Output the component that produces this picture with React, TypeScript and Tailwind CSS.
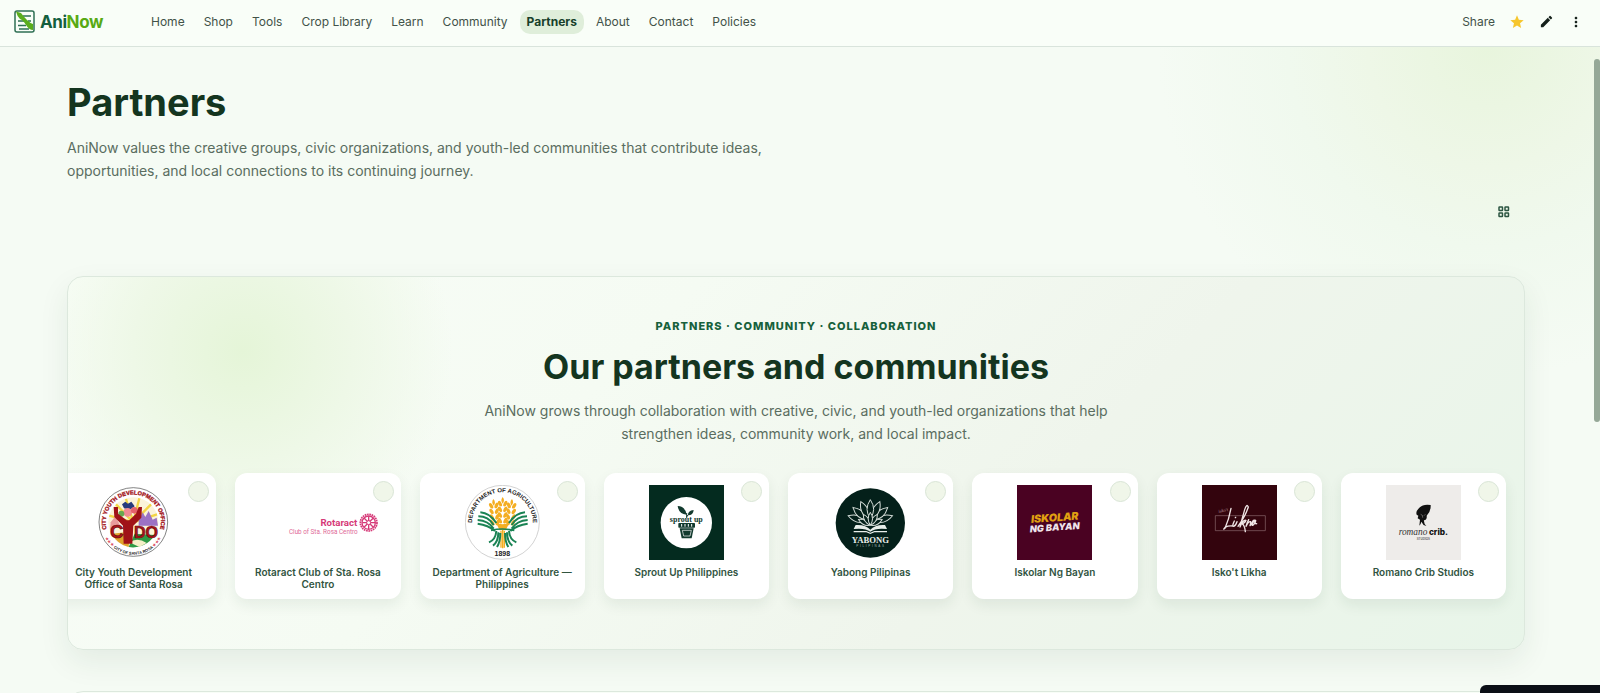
import type { ReactNode } from 'react'
import { MdEdit, MdMoreVert, MdStar } from 'react-icons/md'

const navItems = ['Home', 'Shop', 'Tools', 'Crop Library', 'Learn', 'Community', 'Partners', 'About', 'Contact', 'Policies']

const CydoLogo = () => (
  <svg viewBox="0 0 225 225" className="size-full overflow-visible" aria-hidden="true">
    <circle cx="112" cy="111" r="103" fill="#fff" stroke="#444" strokeWidth="2" />
    <circle cx="112" cy="112" r="75" fill="#fbf3da" />
    <path d="M112 112 60 58M112 112 90 42M112 112 130 40M112 112 165 58M112 112 183 88M112 112 40 92" stroke="#f3d545" strokeWidth="7" />
    <path d="M48 146a75 75 0 0 0 50 40l4-46z" fill="#e0a32c" />
    <path d="M98 186a76 76 0 0 0 78-36l-60-4z" fill="#2f9a45" />
    <path d="M100 172q24-16 52 2l-22 12z" fill="#f5f0c8" />
    <path d="m128 106 12-24 8 14 10-18 12 26 12-6 4 24h-58z" fill="#9b72c4" />
    <path d="m44 112 14-18 14 26-14 10-16 4z" fill="#e99c9c" />
    <path d="m78 58 10-8 8 6 10-6 10 14-14 10-18-4z" fill="#273a7c" />
    <circle cx="95" cy="82" r="13" fill="#f08a93" />
    <circle cx="115" cy="76" r="10" fill="#e5616c" />
    <circle cx="76" cy="86" r="9" fill="#68a84f" />
    <path d="M53 66h13v20l26 20h8l20-20 8-20h10l-2 32-24 24-3 54H83l-2-54-26-26z" fill="#a01218" />
    <text x="42" y="160" fontSize="56" fontWeight="900" fill="#b01319" stroke="#5d0b0e" strokeWidth="2" className="font-['Liberation_Sans']">C</text>
    <text x="114" y="160" fontSize="48" fontWeight="900" fill="#b01319" stroke="#5d0b0e" strokeWidth="2" className="font-['Liberation_Sans']">DO</text>
    <path id="cydo-top" d="M37 147A83 83 0 1 1 187 147" fill="none" />
    <text fontSize="17" fontWeight="800" fill="#a3161b" stroke="#a3161b" strokeWidth="1" textAnchor="middle" className="font-['Liberation_Sans']">
      <textPath href="#cydo-top" startOffset="50%">CITY YOUTH DEVELOPMENT OFFICE</textPath>
    </text>
    <path id="cydo-bottom" d="M24 150A95 95 0 0 0 200 150" fill="none" />
    <text fontSize="12" fontWeight="700" fill="#222" textAnchor="middle" className="font-['Liberation_Sans']">
      <textPath href="#cydo-bottom" startOffset="50%"><tspan fill="#d9475c">★★★</tspan> CITY OF SANTA ROSA <tspan fill="#d9475c">★★★</tspan></textPath>
    </text>
  </svg>
)

const RotaractLogo = () => (
  <svg viewBox="0 0 225 225" className="size-full overflow-visible" aria-hidden="true">
    <text x="232" y="122" fontSize="29" fontWeight="700" fill="#d63a78" textAnchor="end" className="font-['Roboto']">Rotaract</text>
    <text x="233" y="146" fontSize="19" fill="#e06a98" textAnchor="end" className="font-['Roboto']">Club of Sta. Rosa Centro</text>
    <g fill="none" stroke="#d63a78">
      <circle cx="266" cy="113" r="25" strokeWidth="5" strokeDasharray="5 2" />
      <circle cx="266" cy="113" r="20" strokeWidth="4" />
      <path d="M266 94v38M247 113h38M252 99l28 28M280 99l-28 28" strokeWidth="4" />
      <circle cx="266" cy="113" r="6" fill="#fff" strokeWidth="3" />
    </g>
  </svg>
)

const grains = [0, 1, 2, 3]

const AgricultureLogo = () => (
  <svg viewBox="0 0 225 225" className="size-full" aria-hidden="true">
    <circle cx="112" cy="112" r="111" fill="#fff" stroke="#bbb" strokeWidth="2" />
    {[-1, 0, 1].map((side) => (
      <g key={side} fill="#f4ae22" transform={`translate(${113 + side * 28} ${side === 0 ? 36 : 42}) rotate(${side * 4})`}>
        <path d="M0 0q8 10 0 20q-8-10 0-20z" />
        {grains.map((g) => (
          <g key={g} transform={`translate(0 ${g * 17})`}>
            <ellipse cx="-8" cy="20" rx="5" ry="9" transform="rotate(-28 -8 20)" />
            <ellipse cx="8" cy="20" rx="5" ry="9" transform="rotate(28 8 20)" />
          </g>
        ))}
      </g>
    ))}
    <path d="M113 120v70M108 138v50M118 138v50" stroke="#f4ae22" strokeWidth="4" />
    <path d="M92 112q20 12 42 0l-12 24h-18z" fill="#f4ae22" />
    <g fill="none" stroke="#1a8354" strokeWidth="6">
      <path d="M46 82q28 2 48 32M40 94q30 0 46 26M38 105q32 2 48 26M38 116q32 4 52 22" />
      <path d="M180 82q-28 2-48 32M186 94q-30 0-46 26M188 105q-32 2-48 26M188 116q-32 4-52 22" />
      <path d="M94 138q-2 26-22 34M100 142q0 28-16 40M106 144q0 26-10 42" />
      <path d="M132 138q2 26 22 34M126 142q0 28 16 40M120 144q0 26 10 42" />
      <path d="M78 136q34-8 70 0" strokeWidth="5" />
    </g>
    <path id="da-top" d="M24 134A91 91 0 1 1 201 134" fill="none" />
    <text fontSize="18" fontWeight="700" fill="#222" textAnchor="middle" className="font-['Liberation_Sans']">
      <textPath href="#da-top" startOffset="50%">DEPARTMENT OF AGRICULTURE</textPath>
    </text>
    <text x="112" y="213" fontSize="21" fontWeight="700" fill="#222" textAnchor="middle" className="font-['Liberation_Sans']">1898</text>
  </svg>
)

const SproutLogo = () => (
  <svg viewBox="0 0 225 225" className="size-full" aria-hidden="true">
    <rect width="225" height="225" fill="#042b1f" />
    <circle cx="112" cy="113" r="77" fill="#fff" />
    <g fill="#123a2e">
      <path d="M86 63q22 0 27 26q-24-2-27-26z" />
      <path d="M134 75q-18 2-17 16q16 0 17-16z" />
      <rect x="88" y="114" width="50" height="14" rx="2" />
      <path d="M92 130h42l-6 30h-30z" />
    </g>
    <path d="M113 84v14M117 90q-4 4-4 8" stroke="#123a2e" strokeWidth="3" fill="none" />
    <path d="M100 136h27l-4 17h-19z" fill="none" stroke="#fff" strokeWidth="2" />
    <path d="M98 117v8M108 117v8M118 117v8M128 117v8" stroke="#fff" strokeWidth="3" />
    <text x="112" y="110" fontSize="24" fontWeight="700" fill="#123a2e" textAnchor="middle" className="font-['Liberation_Serif']">sprout up</text>
  </svg>
)

const YabongLogo = () => (
  <svg viewBox="0 0 225 225" className="size-full" aria-hidden="true">
    <circle cx="112" cy="114" r="104" fill="#04201a" />
    <g fill="#04201a" stroke="#d5ddd8" strokeWidth="3">
      {[-72, 72, -48, 48, -24, 24, 0].map((deg) => (
        <path key={deg} d="M112 100q-20-26 0-56q20 30 0 56z" transform={`rotate(${deg} 112 114)`} />
      ))}
      {[-62, 62, -32, 32, 0].map((deg) => (
        <path key={deg} d="M112 120q-13-18 0-38q13 20 0 38z" transform={`rotate(${deg} 112 122)`} />
      ))}
    </g>
    <path d="M68 120q30-2 44 14q14-16 44-14l6 12q-34-4-50 8q-16-12-50-8z" fill="#e8eeea" />
    <path d="M62 138h38l12 5 12-5h38v4h-38l-12 5-12-5H62z" fill="#e8eeea" />
    <text x="112" y="173" fontSize="26" fontWeight="700" fill="#e8eeea" textAnchor="middle" className="font-['Liberation_Serif']">YABONG</text>
    <text x="114" y="185" fontSize="9" fill="#a9b8b1" textAnchor="middle" letterSpacing="5" className="font-['Liberation_Sans']">PILIPINAS</text>
  </svg>
)

const IskolarLogo = () => (
  <svg viewBox="0 0 225 225" className="size-full" aria-hidden="true">
    <rect width="225" height="225" fill="#4a0222" />
    <g fontWeight="900" fontStyle="italic" textAnchor="middle" transform="rotate(-4 112 112)" className="font-['Inter']">
      <text x="114" y="109" fontSize="32" fill="#e0a011">ISKOLAR</text>
      <text x="112" y="137" fontSize="28" fill="#efe3ea">NG BAYAN</text>
    </g>
  </svg>
)

const LikhaLogo = () => (
  <svg viewBox="0 0 225 225" className="size-full" aria-hidden="true">
    <rect width="225" height="225" fill="#33040d" />
    <path d="M40 92h150v45H40z" fill="none" stroke="#8d6b70" strokeWidth="2" />
    <g fill="none" stroke="#f0e6e6" strokeWidth="4" strokeLinecap="round" strokeLinejoin="round">
      <path d="M87 70q-6 32-18 60q-8 6 0-3q10-5 22-4" />
      <path d="M97 108q-8 16-2 16q6-2 10-14M100 98l1-1" />
      <path d="M108 124q22-30 31-58q-5-12-11 8q-8 28-14 52q8-22 18-20q-4 10-12 10q8 4 10 24" />
      <path d="M140 104q-6 12-8 20q8-16 14-14q0 6-2 12q4-4 10-16q10-2 6 4q-6 14-10 10q0-8 10-14q-2 12 4 10" />
    </g>
    <text x="50" y="84" fontSize="14" fontStyle="italic" fill="#b99da1" transform="rotate(-12 50 84)" className="font-['Liberation_Serif']">isko't</text>
  </svg>
)

const RomanoLogo = () => (
  <svg viewBox="0 0 225 225" className="size-full" aria-hidden="true">
    <rect width="225" height="225" fill="#eeecea" />
    <path d="M134 60q-22-4-34 8q-12 12-8 21l5 3l-2 8l7 4l-2 18q4-2 6-12q4 10 15 13q-8-8-7-17q10-2 8-14q13-12 12-32z" fill="#111" />
    <path d="M104 88q8 2 6 10M114 92l4-4" stroke="#8c8a88" strokeWidth="2" fill="none" />
    <text x="38" y="149" fontSize="28" fontStyle="italic" fill="#333" className="font-['Liberation_Serif']">romano</text>
    <text x="186" y="149" fontSize="25" fontWeight="800" fill="#111" textAnchor="end" className="font-['Inter']">crib.</text>
    <text x="112" y="166" fontSize="9" fontWeight="600" fill="#555" textAnchor="middle" className="font-['Inter']">STUDIOS</text>
  </svg>
)

const partners: { name: string; logo: ReactNode }[] = [
  { name: 'City Youth Development Office of Santa Rosa', logo: <CydoLogo /> },
  { name: 'Rotaract Club of Sta. Rosa Centro', logo: <RotaractLogo /> },
  { name: 'Department of Agriculture — Philippines', logo: <AgricultureLogo /> },
  { name: 'Sprout Up Philippines', logo: <SproutLogo /> },
  { name: 'Yabong Pilipinas', logo: <YabongLogo /> },
  { name: 'Iskolar Ng Bayan', logo: <IskolarLogo /> },
  { name: "Isko't Likha", logo: <LikhaLogo /> },
  { name: 'Romano Crib Studios', logo: <RomanoLogo /> },
]

const Header = () => (
  <header className="flex h-[47px] shrink-0 items-center border-b border-[#d9e4dc] bg-[#f9fef8] pb-[3px] pl-[14px] pr-4">
    <a href="#home" className="flex w-[130px] shrink-0 items-center gap-1">
      <svg viewBox="0 0 22 24" className="h-6 w-[22px]" aria-hidden="true">
        <rect x="1" y="1" width="19" height="21" rx="2" fill="#f9fef8" stroke="#2f7054" strokeWidth="1.5" />
        <path d="M9 6h8M4 11h7M14 11h3M4 15.500h8M5 19h10" stroke="#2f7054" strokeWidth="1.300" />
        <path d="M2 1.500 7 3q3 4 6 7t6 4v6q-4 0-7-5t-6-6Q3 6 2 1.500z" fill="#5aad1c" />
      </svg>
      <span className="text-[17px] font-bold leading-5 tracking-tight text-[#14603f]">
        Ani<span className="text-[#58aa14]">Now</span>
      </span>
    </a>
    <nav className="flex items-center gap-[5px]">
      {navItems.map((item) => (
        <a
          key={item}
          href={`#${item.toLowerCase().replace(' ', '-')}`}
          className={
            item === 'Partners'
              ? 'rounded-[10px] bg-[#dfeeda] px-[7px] py-[3px] text-xs font-bold leading-[18px] text-[#173f2a]'
              : 'rounded-[10px] px-[7px] py-[3px] text-xs leading-[18px] text-[#425248]'
          }
        >
          {item}
        </a>
      ))}
    </nav>
    <div className="ml-auto flex items-center gap-[14px] text-[#14201a]">
      <button type="button" className="text-xs text-[#425248]">Share</button>
      <button type="button" aria-label="Favorite"><MdStar size={16} color="#f6c62d" /></button>
      <button type="button" aria-label="Edit"><MdEdit size={15} /></button>
      <button type="button" aria-label="More"><MdMoreVert size={16} /></button>
    </div>
  </header>
)

const PartnerCard = ({ name, logo }: { name: string; logo: ReactNode }) => (
  <li className="relative flex h-[126px] min-w-[165px] flex-1 flex-col items-center rounded-xl bg-white px-[11px] pt-3 shadow-[0_6px_14px_rgba(20,70,40,0.08)]">
    <div className="size-[75px]">{logo}</div>
    <p className="mt-[6px] text-center text-[10px] font-semibold leading-3 text-[#31543f]">{name}</p>
    <span className="absolute right-[7px] top-2 size-[21px] rounded-full border border-[#d9e5d6] bg-[#f0f6e9]" />
  </li>
)

const App = () => {
  return (
    <div className="relative flex h-screen flex-col overflow-hidden bg-[#f5fbf4] font-['Inter',sans-serif]">
      <Header />
      <main className="flex-1 overflow-hidden bg-[radial-gradient(circle_at_93%_0,#e8f5dd_0,#eef7e7_120px,#f0f9ee_200px,#f5fbf4_330px)] pl-[67px] pr-[75px]">
        <div className="pt-[31px]">
          <h1 className="text-[38px] font-bold leading-[48px] text-[#14351f]">Partners</h1>
          <p className="mt-[10px] max-w-[720px] text-sm leading-[23px] text-[#5a6d60]">
            AniNow values the creative groups, civic organizations, and youth-led communities that contribute ideas,
            opportunities, and local connections to its continuing journey.
          </p>
        </div>
        <div className="mt-5 flex justify-end pr-[15px]">
          <button type="button" aria-label="Grid view" className="py-1">
            <svg viewBox="0 0 12 12" className="size-3" fill="none" stroke="#2c5542" strokeWidth="1.500" aria-hidden="true">
              <rect x="1" y="1" width="3.500" height="3.500" rx=".5" />
              <rect x="7" y="1" width="3.500" height="3.500" rx=".5" />
              <rect x="1" y="7" width="3.500" height="3.500" rx=".5" />
              <rect x="7" y="7" width="3.500" height="3.500" rx=".5" />
            </svg>
          </button>
        </div>

        <section className="mt-[54px] overflow-hidden rounded-2xl border border-[#dce8dd] bg-[radial-gradient(circle_at_12%_20%,#e5f5d8_0,#eef8e7_110px,transparent_210px),linear-gradient(135deg,#f8fdf7_0%,#f5fbf3_35%,#eff5ec_65%,#e8f5e9_100%)] pb-[50px] pt-[41px] shadow-[0_12px_30px_rgba(20,60,35,0.08)]">
          <div className="text-center">
            <p className="text-[11px] font-extrabold uppercase leading-4 tracking-[1px] text-[#17613c]">
              Partners · Community · Collaboration
            </p>
            <h2 className="mt-[13px] text-[34px] font-bold leading-10 text-[#14351f]">
              Our partners and communities
            </h2>
            <p className="mx-auto mt-3 max-w-[650px] text-sm leading-[23px] text-[#5a6d60]">
              AniNow grows through collaboration with creative, civic, and youth-led organizations that help strengthen
              ideas, community work, and local impact.
            </p>
          </div>
          <ul className="-ml-[17px] mr-[18px] mt-[28px] flex gap-[19px]">
            {partners.map((partner) => (
              <PartnerCard key={partner.name} {...partner} />
            ))}
          </ul>
        </section>

        <section className="mt-[41px] h-20 rounded-2xl border border-[#dce8dd] bg-[#f8fdf7]" />
      </main>
      <div className="absolute right-0 top-[59px] h-[363px] w-[6px] rounded-full bg-[#95a897]" />
      <div className="absolute bottom-0 right-0 h-2 w-[120px] rounded-tl-md bg-[#0b0f16]" />
    </div>
  )
}

export default App
